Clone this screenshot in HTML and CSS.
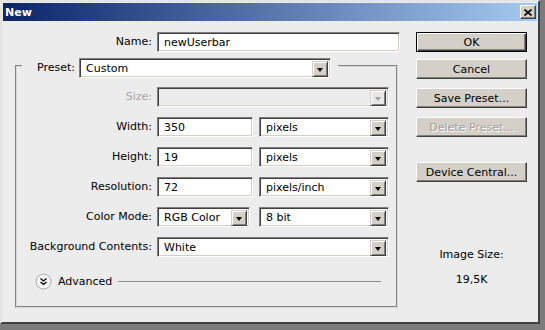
FILE: index.html
```html
<!DOCTYPE html>
<html>
<head>
	<title>New</title>
	<link rel="stylesheet" href="styles.css">
</head>
<body>
<div class="window">
	<div class="titlebar">
		<span class="title">New</span>
		<span class="close">
			<svg width="8" height="7" viewBox="0 0 8 7"><path d="M0.5 0.5L7.5 6.5M7.5 0.5L0.5 6.5" stroke="#000" stroke-width="1.6" fill="none"/></svg>
		</span>
	</div>
	<div class="dialog">
		<div class="main">
			<div class="name-row">
				<span class="lbl">Name:</span>
				<div class="field">newUserbar</div>
			</div>
			<fieldset class="group">
				<legend class="preset">
					<span class="lbl">Preset:</span>
					<div class="field select preset-box">Custom<span class="drop"><i class="arrow"></i></span></div>
				</legend>
				<div class="rows">
					<span class="lbl off">Size:</span>
					<div class="field select disabled"><span class="drop"><i class="arrow"></i></span></div>

					<span class="lbl">Width:</span>
					<div class="pair">
						<div class="field num">350</div>
						<div class="field select unit">pixels<span class="drop"><i class="arrow"></i></span></div>
					</div>

					<span class="lbl">Height:</span>
					<div class="pair">
						<div class="field num">19</div>
						<div class="field select unit">pixels<span class="drop"><i class="arrow"></i></span></div>
					</div>

					<span class="lbl">Resolution:</span>
					<div class="pair">
						<div class="field num">72</div>
						<div class="field select unit">pixels/inch<span class="drop"><i class="arrow"></i></span></div>
					</div>

					<span class="lbl">Color Mode:</span>
					<div class="pair">
						<div class="field select mode">RGB Color<span class="drop"><i class="arrow"></i></span></div>
						<div class="field select unit">8 bit<span class="drop"><i class="arrow"></i></span></div>
					</div>

					<span class="lbl">Background Contents:</span>
					<div class="field select">White<span class="drop"><i class="arrow"></i></span></div>
				</div>
				<div class="advanced">
					<svg class="adv-icon" width="17" height="17" viewBox="0 0 17 17">
						<circle cx="8.5" cy="8.5" r="7.5" fill="#f6f6f6" stroke="#a8a8a8"/>
						<path d="M5.5 5.5L8.5 8L11.5 5.5M5.5 9L8.5 11.5L11.5 9" stroke="#000" stroke-width="1.3" fill="none"/>
					</svg>
					<span>Advanced</span>
					<span class="rule"></span>
				</div>
			</fieldset>
		</div>
		<div class="side">
			<div class="btn default">OK</div>
			<div class="btn cancel">Cancel</div>
			<div class="btn save">Save Preset...</div>
			<div class="btn del">Delete Preset...</div>
			<div class="btn device">Device Central...</div>
			<div class="info">
				<div>Image Size:</div>
				<div class="size">19,5K</div>
			</div>
		</div>
	</div>
</div>
</body>
</html>
```

FILE: styles.css
```css
*{
	margin:0px;
	padding:0px;
}
body{
	background:#7b7b7b;
	font-family:"DejaVu Sans", sans-serif;
	font-size:11px;
	color:#000;
}
.window{
	width:540px;
	height:324px;
	box-sizing:border-box;
	background:#ececec;
	border:2px solid;
	border-color:#e4e4e4 #404040 #404040 #e4e4e4;
	padding:1px;
	display:flex;
	flex-direction:column;
}
.titlebar{
	height:18px;
	background:linear-gradient(to right, #0a246a, #a6caf0);
	display:flex;
	align-items:center;
	justify-content:space-between;
	padding:0 1px 0 2px;
}
.title{
	color:#fff;
	font-weight:bold;
}
.close{
	width:16px;
	height:14px;
	box-sizing:border-box;
	background:#d4d0c8;
	border:1px solid;
	border-color:#fff #404040 #404040 #fff;
	box-shadow:inset -1px -1px 0 #808080;
	display:flex;
	align-items:center;
	justify-content:center;
}
.close svg{
	display:block;
}
.dialog{
	flex:1;
	display:flex;
	padding-top:11px;
}
.main{
	width:385px;
	padding-left:12px;
}
.side{
	width:111px;
	margin-left:16px;
}
.lbl{
	text-align:right;
	line-height:20px;
	white-space:nowrap;
}
.lbl.off{
	color:#a8a8a8;
}
.name-row{
	display:grid;
	grid-template-columns:137px 243px;
	column-gap:5px;
}
.field{
	height:20px;
	box-sizing:border-box;
	background:#fff;
	border:1px solid;
	border-color:#808080 #fff #fff #808080;
	box-shadow:inset 1px 1px 0 #404040, inset -1px -1px 0 #d4d0c8;
	padding:1px 0 0 6px;
	line-height:17px;
	position:relative;
	display:flex;
	align-items:flex-start;
}
.select{
	padding-right:18px;
}
.field.disabled{
	background:#ececec;
}
.drop{
	position:absolute;
	top:2px;
	right:2px;
	width:16px;
	height:16px;
	box-sizing:border-box;
	background:#d4d0c8;
	border:1px solid;
	border-color:#d4d0c8 #404040 #404040 #d4d0c8;
	box-shadow:inset 1px 1px 0 #fff, inset -1px -1px 0 #808080;
	display:flex;
	align-items:center;
	justify-content:center;
}
.arrow{
	display:block;
	width:0;
	height:0;
	border-left:3.5px solid transparent;
	border-right:3.5px solid transparent;
	border-top:4px solid #000;
	margin-top:1px;
}
.disabled .drop{
	background:#e8e8e8;
}
.disabled .arrow{
	border-top-color:#a0a0a0;
}
.group{
	margin-top:6px;
	width:383px;
	box-sizing:border-box;
	border:2px groove #d8d8d8;
	padding:14px 0 17px 0;
	min-width:0;
}
.preset{
	margin-left:5px;
	padding:0 7px 0 15px;
	height:15px;
	display:flex;
	align-items:flex-start;
	column-gap:4px;
}
.preset-box{
	width:252px;
	flex:none;
}
.rows{
	display:grid;
	grid-template-columns:135px 232px;
	column-gap:5px;
	row-gap:10px;
}
.pair{
	display:flex;
	justify-content:space-between;
}
.num{
	width:96px;
}
.unit{
	width:130px;
}
.mode{
	width:93px;
}
.advanced{
	margin:16px 15px 0 18px;
	display:flex;
	align-items:center;
	height:16px;
	column-gap:6px;
}
.adv-icon{
	display:block;
	flex:none;
}
.rule{
	flex:1;
	height:1px;
	background:#8c8c8c;
}
.btn{
	height:20px;
	box-sizing:border-box;
	background:#d4d0c8;
	border:1px solid;
	border-color:#fff #404040 #404040 #fff;
	box-shadow:inset -1px -1px 0 #808080;
	display:flex;
	align-items:center;
	justify-content:center;
}
.btn.default{
	border-color:#000;
	box-shadow:inset 1px 1px 0 #fff, inset -1px -1px 0 #404040, inset -2px -2px 0 #808080;
}
.cancel{
	margin-top:7px;
}
.save{
	margin-top:9px;
}
.del{
	margin-top:9px;
	color:#a0a0a0;
	text-shadow:1px 1px 0 #fff;
}
.device{
	margin-top:25px;
}
.info{
	margin-top:66px;
	text-align:center;
	line-height:13px;
}
.info .size{
	margin-top:12px;
}
```
